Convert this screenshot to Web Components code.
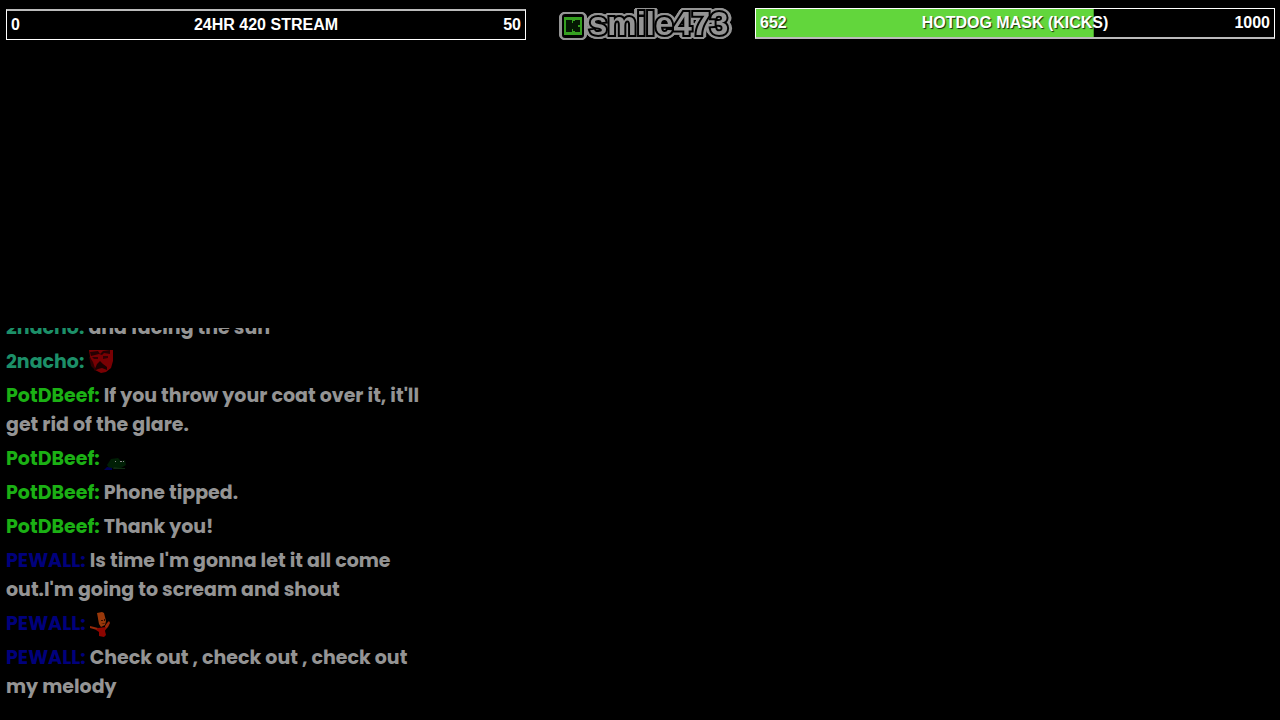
<!DOCTYPE html>
<html lang="en">
<head>
<meta charset="UTF-8">
<meta name="viewport" content="width=device-width, initial-scale=1">
<title>Stream Overlay</title>
<style>
  body {
    margin: 0;
    background: #000;
  }
</style>
</head>
<body>
<stream-overlay>
  <goal-bar slot="goals" class="first" value="0" max="50">24HR 420 STREAM</goal-bar>
  <channel-logo slot="goals">smile473</channel-logo>
  <goal-bar slot="goals" class="last" value="652" max="1000">HOTDOG MASK (KICKS)</goal-bar>

  <chat-message user="2nacho" color="#1c8f68">and facing the sun</chat-message>
  <chat-message user="2nacho" color="#1c8f68"><chat-emote name="face"></chat-emote></chat-message>
  <chat-message user="PotDBeef" color="#1bb014">If you throw your coat over it, it'll get rid of the glare.</chat-message>
  <chat-message user="PotDBeef" color="#1bb014"><chat-emote name="frog"></chat-emote></chat-message>
  <chat-message user="PotDBeef" color="#1bb014">Phone tipped.</chat-message>
  <chat-message user="PotDBeef" color="#1bb014">Thank you!</chat-message>
  <chat-message user="PEWALL" color="#00007c">Is time I'm gonna let it all come out.I'm going to scream and shout</chat-message>
  <chat-message user="PEWALL" color="#00007c"><chat-emote name="dance"></chat-emote></chat-message>
  <chat-message user="PEWALL" color="#00007c">Check out , check out , check out my melody</chat-message>
</stream-overlay>

<script>
class StreamOverlay extends HTMLElement {
  connectedCallback() {
    this.attachShadow({ mode: 'open' });
    this.shadowRoot.innerHTML = `
      <style>
        :host {
          display: flex;
          flex-direction: column;
          justify-content: space-between;
          box-sizing: border-box;
          height: 100vh;
          padding: 8px 5px 14px 6px;
          background: #000;
          overflow: hidden;
        }
        header {
          display: grid;
          grid-template-columns: 1fr 165px 1fr;
          gap: 32px;
        }
        ::slotted(.first) {
          align-self: end;
          --edge-top: 2px solid #bbb;
        }
        ::slotted(.last) {
          align-self: start;
          --edge-bottom: 2px solid #bbb;
        }
        .chat {
          display: flex;
          flex-direction: column;
          justify-content: flex-end;
          width: 34%;
          height: 378px;
          overflow: hidden;
        }
      </style>
      <header><slot name="goals"></slot></header>
      <section class="chat" aria-label="Chat"><slot></slot></section>
    `;
  }
}
customElements.define('stream-overlay', StreamOverlay);

class GoalBar extends HTMLElement {
  connectedCallback() {
    const value = Number(this.getAttribute('value'));
    const max = Number(this.getAttribute('max'));
    this.attachShadow({ mode: 'open' });
    this.shadowRoot.innerHTML = `
      <style>
        :host {
          display: block;
        }
        .bar {
          display: grid;
          grid-template-columns: 1fr auto 1fr;
          align-items: center;
          box-sizing: border-box;
          height: 31px;
          padding: 0 4px;
          border: 1px solid #fff;
          border-top: var(--edge-top, 1px solid #fff);
          border-bottom: var(--edge-bottom, 1px solid #fff);
          background: linear-gradient(#62d63c, #62d63c) no-repeat 0 0 / ${value / max * 100}% 100%;
          color: #fff;
          font: bold 16px/28px "Liberation Sans", Arial, sans-serif;
          text-shadow: 1px 1px 1px rgba(0, 0, 0, 0.8);
        }
        .max {
          text-align: right;
        }
      </style>
      <div class="bar" role="progressbar" aria-valuenow="${value}" aria-valuemax="${max}">
        <span>${value}</span>
        <span><slot></slot></span>
        <span class="max">${max}</span>
      </div>
    `;
  }
}
customElements.define('goal-bar', GoalBar);

class ChannelLogo extends HTMLElement {
  connectedCallback() {
    this.attachShadow({ mode: 'open' });
    this.shadowRoot.innerHTML = `
      <style>
        :host {
          display: block;
          height: 32px;
          clip-path: inset(0 -12px -12px);
        }
        .mark {
          display: flex;
          align-items: center;
          gap: 5px;
          height: 32px;
          color: #949494;
          font: bold 33px/32px "Liberation Sans", Arial, sans-serif;
          filter: drop-shadow(1px 1px #949494) drop-shadow(-1px -1px #949494) drop-shadow(1px -1px #949494) drop-shadow(-1px 1px #949494) drop-shadow(1px 0 #949494) drop-shadow(-1px 0 #949494);
        }
        svg {
          flex: none;
          width: 22px;
          height: 24px;
          margin: 4px 0 0 4px;
        }
        span {
          -webkit-text-stroke: 4px #000;
          paint-order: stroke fill;
          stroke-linejoin: round;
        }
      </style>
      <div class="mark">
        <svg viewBox="0 0 22 24" aria-hidden="true">
          <rect width="22" height="24" rx="3" fill="#000"/>
          <rect x="2" y="3" width="18" height="18" fill="#359f20"/>
          <path d="M4 6h6v3h1V7h2V6h5v5h-2v2h2v5h-5v-1h-2v-2h-1v3H4z" fill="#051803"/>
        </svg>
        <span><slot></slot></span>
      </div>
    `;
  }
}
customElements.define('channel-logo', ChannelLogo);

class ChatMessage extends HTMLElement {
  connectedCallback() {
    this.attachShadow({ mode: 'open' });
    this.shadowRoot.innerHTML = `
      <style>
        :host {
          display: block;
          flex: none;
          padding-bottom: 5px;
          color: #949494;
          font: 700 19px/29px Poppins, Inter, sans-serif;
        }
        .user {
          color: ${this.getAttribute('color')};
        }
      </style>
      <span class="user">${this.getAttribute('user')}:</span>
      <slot></slot>
    `;
  }
}
customElements.define('chat-message', ChatMessage);

const EMOTES = {
  face: `
    <path d="M1 0l12-1 12 1v11l-2 7-5 4-5 1-6-3-4-7z" fill="#780003"/>
    <path d="M2 2l8-1 2 3 3-3 7-1v4l-6-1-2 2-3-1-8 2z" fill="#240002"/>
    <path d="M4 7h6v2H6zM15 6h5v2l-5 1z" fill="#300003"/>
    <path d="M12 11l-3 3-3 7 4-2 4-1 5 2v-3l-4-3z" fill="#1b0001"/>
    <path d="M1 6l4 6 3 9-5-5z" fill="#300002"/>`,
  frog: `
    <path d="M3 18l4-6 7-1 3 3 4-1 1 5-5 3H5z" fill="#001f05"/>
    <path d="M0 23l3-3 5 1v2z" fill="#000052"/>
    <path d="M10 20l6 1h5v1H9z" fill="#102d13"/>
    <path d="M11 14h1v1h-1zM16 14h2v1h-2zM19 14h1v1h-1z" fill="#888"/>`,
  dance: `
    <path d="M7 1l5-1 2 1 2 8-1 4-4 2-2-3z" fill="#98380a"/>
    <path d="M0 14l8 2-1 2-7-2zM15 14l2-3 2-2 1 2-2 4-3 3z" fill="#96280a"/>
    <path d="M8 16l8-1-1 4 1 4-2 2-5-1v-4l-3-2z" fill="#8d0500"/>
    <path d="M11 8h2v1h-2zM14 7h1v2h-1zM11 12l4-1-1 1z" fill="#300d00"/>`
};

class ChatEmote extends HTMLElement {
  connectedCallback() {
    this.attachShadow({ mode: 'open' });
    this.shadowRoot.innerHTML = `
      <style>
        :host {
          display: inline-block;
          width: 25px;
          height: 25px;
          vertical-align: middle;
        }
        svg {
          display: block;
        }
      </style>
      <svg viewBox="0 0 25 25" width="25" height="25" aria-hidden="true">${EMOTES[this.getAttribute('name')]}</svg>
    `;
  }
}
customElements.define('chat-emote', ChatEmote);
</script>
</body>
</html>
